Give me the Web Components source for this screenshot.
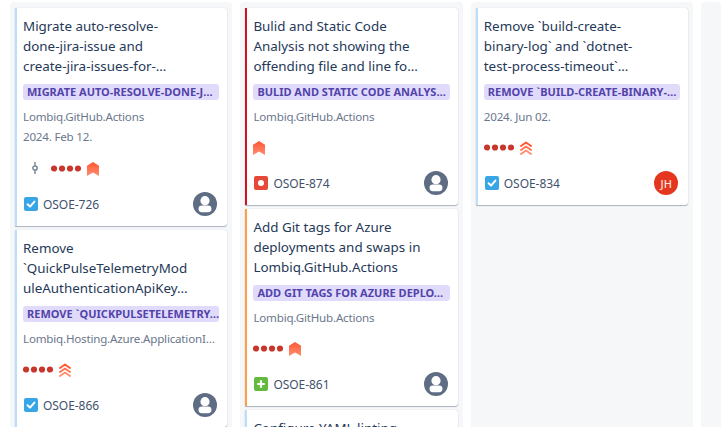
<!DOCTYPE html>
<html><head><meta charset="utf-8">
<style>
html,body{margin:0;padding:0;height:427px;overflow:hidden;background:#fff}
body{font-family:"Noto Sans","Open Sans",sans-serif}
</style></head><body>
<template id="t-board"><style>
:host{display:flex;gap:8px;padding:2px 0 0 10px;height:427px;width:721px;overflow:hidden;box-sizing:border-box}
</style><slot></slot></template>

<template id="t-col"><style>
:host{display:flex;flex-direction:column;gap:4px;width:222.4px;flex:none;box-sizing:border-box;padding:6px 5px 0 5px;background:#f6f7f9;border-radius:4px 4px 0 0;overflow:hidden}
:host([rest]){flex:1 1 0;width:auto;min-width:0}
</style><slot></slot></template>

<template id="t-card"><style>
:host{display:block;flex:none;background:#fff;border-left:2px solid var(--accent,#bbdefb);border-radius:0 3px 3px 0;box-shadow:0 1px 1px rgba(9,30,66,.3),0 0 1px rgba(9,30,66,.2);padding:8px 8px 10px 6px;color:#172b4d;font-size:13.4px;line-height:20px;box-sizing:border-box}
.title{color:#253858;margin-bottom:8px;white-space:nowrap}
.tag{height:16px;line-height:16px;border-radius:3px;background:#e1dbfb;color:#5243aa;font-weight:700;font-size:11px;padding:0 4px;white-space:nowrap;overflow:hidden;margin-bottom:7px}
.meta{color:#6b778c;font-size:11.6px;letter-spacing:-.2px;white-space:nowrap}
.icons{display:flex;align-items:center;height:20px;margin-top:var(--icons-gap,10px)}
.foot{display:flex;align-items:center;justify-content:space-between;height:24px;margin-top:14px;padding:0 2px 0 1px}
.key{display:flex;align-items:center;gap:5px;color:#42526e;font-size:12px}
#k{padding-top:1px;letter-spacing:-.05px}
</style>
<div class="title"><slot name="title"></slot></div>
<div class="tag"><slot name="tag"></slot></div>
<div class="meta"><slot name="meta"></slot></div>
<div class="icons"><slot name="icons"></slot></div>
<div class="foot"><div class="key"><slot name="type"></slot><span id="k"></span></div><slot name="who"></slot></div>
</template>

<script>
function def(name,tpl){customElements.define(name,class extends HTMLElement{
  constructor(){super();const s=this.attachShadow({mode:"open"});s.appendChild(document.getElementById(tpl).content.cloneNode(true));}
  connectedCallback(){const k=this.shadowRoot.getElementById("k");if(k)k.textContent=this.getAttribute("key");
    if(this.hasAttribute("accent"))this.style.setProperty("--accent",this.getAttribute("accent"));
    if(this.hasAttribute("icons-gap"))this.style.setProperty("--icons-gap",this.getAttribute("icons-gap"));}
});}
def("kb-board","t-board");def("kb-col","t-col");def("kb-card","t-card");
function svgEl(name,w,h,css,body){customElements.define(name,class extends HTMLElement{
  constructor(){super();this.attachShadow({mode:"open"}).innerHTML=`<style>:host{display:inline-flex;flex:none;${css}}svg{display:block}</style><svg width="${w}" height="${h}" viewBox="0 0 ${w} ${h}">${body}</svg>`;}
});}
svgEl("ic-commit",6,14,"margin:0 13px 0 9px",'<path d="M3 1v3.5M3 9.5V13" stroke="#6b778c" stroke-width="1.3"/><circle cx="3" cy="7" r="2.2" fill="none" stroke="#6b778c" stroke-width="1.3"/>');
svgEl("ic-dots",30,7,"margin-right:6px",[3,11,19,27].map(x=>`<circle cx="${x}" cy="3.5" r="3.1" fill="#c9372c"/>`).join(""));
svgEl("ic-mark",12,14,"margin-top:2px",'<defs><linearGradient id="g" x1="0" y1="0" x2="0" y2="1"><stop offset="0" stop-color="#ff5630"/><stop offset="1" stop-color="#ff8f73"/></linearGradient></defs><path d="M0 3.8 6 0l6 3.8V14l-6-3.6L0 14z" fill="url(#g)"/>');
svgEl("ic-high",12,14,"margin-top:2px",'<g fill="none" stroke-width="1.9" stroke-linecap="round" stroke-linejoin="round"><path d="M1 5 6 1.5 11 5" stroke="#ff5630"/><path d="M1 9 6 5.5 11 9" stroke="#ff7452"/><path d="M1 13 6 9.5 11 13" stroke="#ff8f73"/></g>');
svgEl("ic-task",14,14,"",'<rect width="14" height="14" rx="2" fill="#36a6e6"/><path d="M3.6 7.3 6 9.6l4.4-5" fill="none" stroke="#fff" stroke-width="2" stroke-linecap="round" stroke-linejoin="round"/>');
svgEl("ic-bug",14,14,"",'<rect width="14" height="14" rx="2" fill="#e5493a"/><circle cx="7" cy="7" r="3" fill="#fff"/>');
svgEl("ic-story",14,14,"",'<rect width="14" height="14" rx="2" fill="#63ba3c"/><path d="M7 3.3v7.4M3.3 7h7.4" stroke="#fff" stroke-width="2.2"/>');
svgEl("ic-user",24,24,"",'<circle cx="12" cy="12" r="12" fill="#5e6c84"/><circle cx="12" cy="8.7" r="4.6" fill="#fff"/><rect x="5.5" y="13.4" width="13" height="6.8" rx="3.4" fill="#fff"/>');
customElements.define("ic-jh",class extends HTMLElement{constructor(){super();this.attachShadow({mode:"open"}).innerHTML=`<style>:host{display:flex;flex:none;width:24px;height:24px;border-radius:50%;background:#e5371f;color:#fce4de;align-items:center;justify-content:center;font-size:11px;font-weight:500;line-height:1}</style><slot></slot>`;}});
</script>

<kb-board>
<kb-col>
  <kb-card key="OSOE-726" icons-gap="11px">
    <span slot="title">Migrate auto-resolve-<br>done-jira-issue and<br>create-jira-issues-for-…</span>
    <span slot="tag">MIGRATE AUTO-RESOLVE-DONE-J…</span>
    <span slot="meta">Lombiq.GitHub.Actions<br>2024. Feb 12.</span>
    <ic-commit slot="icons"></ic-commit><ic-dots slot="icons"></ic-dots><ic-mark slot="icons"></ic-mark>
    <ic-task slot="type"></ic-task><ic-user slot="who"></ic-user>
  </kb-card>
  <kb-card key="OSOE-866">
    <span slot="title">Remove<br>`QuickPulseTelemetryMod<br>uleAuthenticationApiKey…</span>
    <span slot="tag">REMOVE `QUICKPULSETELEMETRY…</span>
    <span slot="meta">Lombiq.Hosting.Azure.ApplicationI…</span>
    <ic-dots slot="icons"></ic-dots><ic-high slot="icons"></ic-high>
    <ic-task slot="type"></ic-task><ic-user slot="who"></ic-user>
  </kb-card>
</kb-col>
<kb-col>
  <kb-card key="OSOE-874" accent="#d3121f">
    <span slot="title">Bulid and Static Code<br>Analysis not showing the<br>offending file and line fo…</span>
    <span slot="tag">BULID AND STATIC CODE ANALYS…</span>
    <span slot="meta">Lombiq.GitHub.Actions</span>
    <ic-mark slot="icons"></ic-mark>
    <ic-bug slot="type"></ic-bug><ic-user slot="who"></ic-user>
  </kb-card>
  <kb-card key="OSOE-861" accent="#ff9f45">
    <span slot="title">Add Git tags for Azure<br>deployments and swaps in<br>Lombiq.GitHub.Actions</span>
    <span slot="tag">ADD GIT TAGS FOR AZURE DEPLO…</span>
    <span slot="meta">Lombiq.GitHub.Actions</span>
    <ic-dots slot="icons"></ic-dots><ic-mark slot="icons"></ic-mark>
    <ic-story slot="type"></ic-story><ic-user slot="who"></ic-user>
  </kb-card>
  <kb-card key="OSOE-000">
    <span slot="title">Configure YAML linting</span>
  </kb-card>
</kb-col>
<kb-col>
  <kb-card key="OSOE-834">
    <span slot="title">Remove `build-create-<br>binary-log` and `dotnet-<br>test-process-timeout`…</span>
    <span slot="tag">REMOVE `BUILD-CREATE-BINARY-…</span>
    <span slot="meta">2024. Jun 02.</span>
    <ic-dots slot="icons"></ic-dots><ic-high slot="icons"></ic-high>
    <ic-task slot="type"></ic-task><ic-jh slot="who">JH</ic-jh>
  </kb-card>
</kb-col>
<kb-col rest></kb-col>
</kb-board>
</body></html>
